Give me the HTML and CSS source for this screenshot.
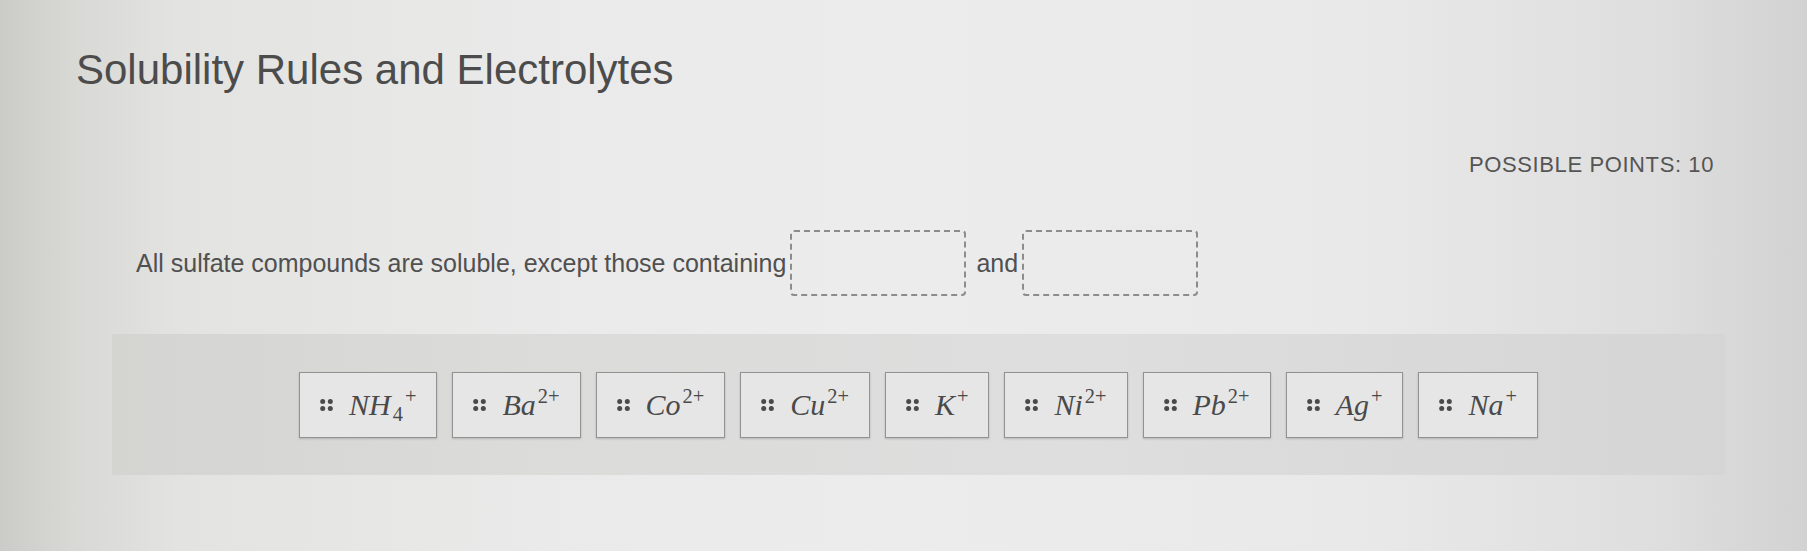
FILE: index.html
```html
<!DOCTYPE html>
<html lang="en">
<head>
    <meta charset="UTF-8">
    <meta name="viewport" content="width=device-width, initial-scale=1.0">
    <title>Solubility Rules and Electrolytes</title>
    <link rel="stylesheet" href="styles.css">
</head>
<body>

<div class="page">
    <h1 class="title">Solubility Rules and Electrolytes</h1>

    <div class="points">POSSIBLE POINTS: 10</div>

    <div class="question">
        <div class="prompt">
            <span>All sulfate compounds are soluble, except those containing</span>
            <span class="blank"></span>
            <span class="joiner">and</span>
            <span class="blank"></span>
        </div>

        <!-- draggable answers -->
        <div class="tray">
            <div class="chip">
                <svg class="grip" width="13" height="12" viewBox="0 0 13 12"><circle cx="2.7" cy="2.6" r="2.5"/><circle cx="10.3" cy="2.6" r="2.5"/><circle cx="2.7" cy="9.4" r="2.5"/><circle cx="10.3" cy="9.4" r="2.5"/></svg>
                <span class="ion"><i>NH</i><sub>4</sub><sup>+</sup></span>
            </div>
            <div class="chip">
                <svg class="grip" width="13" height="12" viewBox="0 0 13 12"><circle cx="2.7" cy="2.6" r="2.5"/><circle cx="10.3" cy="2.6" r="2.5"/><circle cx="2.7" cy="9.4" r="2.5"/><circle cx="10.3" cy="9.4" r="2.5"/></svg>
                <span class="ion"><i>Ba</i><sup>2+</sup></span>
            </div>
            <div class="chip">
                <svg class="grip" width="13" height="12" viewBox="0 0 13 12"><circle cx="2.7" cy="2.6" r="2.5"/><circle cx="10.3" cy="2.6" r="2.5"/><circle cx="2.7" cy="9.4" r="2.5"/><circle cx="10.3" cy="9.4" r="2.5"/></svg>
                <span class="ion"><i>Co</i><sup>2+</sup></span>
            </div>
            <div class="chip">
                <svg class="grip" width="13" height="12" viewBox="0 0 13 12"><circle cx="2.7" cy="2.6" r="2.5"/><circle cx="10.3" cy="2.6" r="2.5"/><circle cx="2.7" cy="9.4" r="2.5"/><circle cx="10.3" cy="9.4" r="2.5"/></svg>
                <span class="ion"><i>Cu</i><sup>2+</sup></span>
            </div>
            <div class="chip">
                <svg class="grip" width="13" height="12" viewBox="0 0 13 12"><circle cx="2.7" cy="2.6" r="2.5"/><circle cx="10.3" cy="2.6" r="2.5"/><circle cx="2.7" cy="9.4" r="2.5"/><circle cx="10.3" cy="9.4" r="2.5"/></svg>
                <span class="ion"><i>K</i><sup>+</sup></span>
            </div>
            <div class="chip">
                <svg class="grip" width="13" height="12" viewBox="0 0 13 12"><circle cx="2.7" cy="2.6" r="2.5"/><circle cx="10.3" cy="2.6" r="2.5"/><circle cx="2.7" cy="9.4" r="2.5"/><circle cx="10.3" cy="9.4" r="2.5"/></svg>
                <span class="ion"><i>Ni</i><sup>2+</sup></span>
            </div>
            <div class="chip">
                <svg class="grip" width="13" height="12" viewBox="0 0 13 12"><circle cx="2.7" cy="2.6" r="2.5"/><circle cx="10.3" cy="2.6" r="2.5"/><circle cx="2.7" cy="9.4" r="2.5"/><circle cx="10.3" cy="9.4" r="2.5"/></svg>
                <span class="ion"><i>Pb</i><sup>2+</sup></span>
            </div>
            <div class="chip">
                <svg class="grip" width="13" height="12" viewBox="0 0 13 12"><circle cx="2.7" cy="2.6" r="2.5"/><circle cx="10.3" cy="2.6" r="2.5"/><circle cx="2.7" cy="9.4" r="2.5"/><circle cx="10.3" cy="9.4" r="2.5"/></svg>
                <span class="ion"><i>Ag</i><sup>+</sup></span>
            </div>
            <div class="chip">
                <svg class="grip" width="13" height="12" viewBox="0 0 13 12"><circle cx="2.7" cy="2.6" r="2.5"/><circle cx="10.3" cy="2.6" r="2.5"/><circle cx="2.7" cy="9.4" r="2.5"/><circle cx="10.3" cy="9.4" r="2.5"/></svg>
                <span class="ion"><i>Na</i><sup>+</sup></span>
            </div>
        </div>
    </div>
</div>

</body>
</html>
```

FILE: styles.css
```css
body {
    margin: 0;
    font-family: "Liberation Sans", Arial, sans-serif;
    color: #4e4e4e;
    background: linear-gradient(90deg, #cbcbc7 0, #d8d8d5 4%, #e3e3e1 10%, #eaeaea 30%, #ececec 50%, #e9e9e9 75%, #dedede 92%, #d2d2d2 100%);
    height: 551px;
    overflow: hidden;
}
.page {
    padding-top: 46px;
}
.title {
    margin: 0;
    padding-left: 76px;
    font-size: 42px;
    font-weight: normal;
    line-height: 48px;
    color: #4c4c4c;
}
.points {
    margin-top: 58px;
    padding-right: 93px;
    text-align: right;
    font-size: 22px;
    line-height: 26px;
    letter-spacing: 0.6px;
    color: #555;
}
.question {
    margin: 52px 82px 0 112px;
}
.prompt {
    display: flex;
    align-items: center;
    gap: 4px;
    padding-left: 24px;
    font-size: 25px;
    line-height: 30px;
    color: #505050;
}
.joiner {
    margin-left: 6px;
}
.blank {
    width: 172px;
    height: 62px;
    border: 2px dashed #8c8c8c;
    border-radius: 4px;
}
.tray {
    margin-top: 38px;
    height: 141px;
    display: flex;
    align-items: center;
    justify-content: center;
    gap: 15px;
    background: linear-gradient(90deg, #d4d4d1 0, #dbdbda 25%, #dedede 60%, #d5d5d5 100%);
}
.chip {
    display: inline-flex;
    align-items: center;
    gap: 16px;
    height: 66px;
    box-sizing: border-box;
    padding: 0 20px;
    background-color: #e6e6e6;
    border: 1px solid #929292;
    box-shadow: 0 1px 2px rgba(0, 0, 0, 0.18);
}
.grip {
    fill: #4a4a4a;
    flex: none;
}
.ion {
    font-family: "Liberation Serif", "Times New Roman", serif;
    font-size: 30px;
    color: #4a4a4a;
    white-space: nowrap;
}
.ion sup,
.ion sub {
    font-size: 0.68em;
    line-height: 0;
    margin-left: 2px;
}
.ion sup {
    vertical-align: 0.55em;
}
.ion sub {
    vertical-align: -0.3em;
}
```
